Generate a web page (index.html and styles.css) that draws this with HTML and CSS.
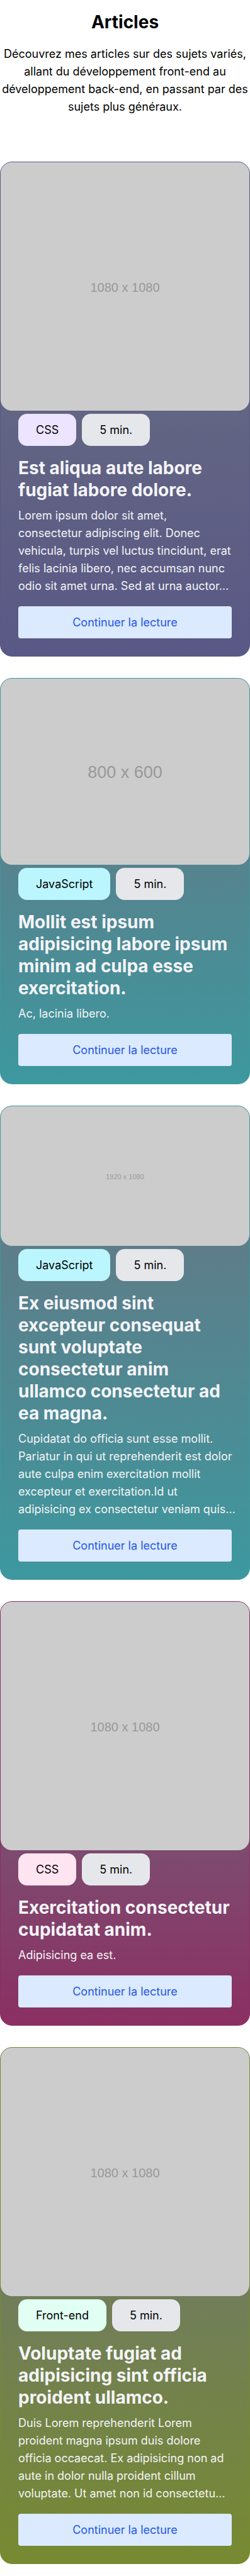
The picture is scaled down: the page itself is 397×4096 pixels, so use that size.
FILE: index.html
```html
<!DOCTYPE html>
<html lang="fr">
<head>
<meta charset="utf-8">
<meta name="viewport" content="width=device-width, initial-scale=1">
<title>Articles</title>
<link rel="stylesheet" href="styles.css">
</head>
<body>
<header class="intro">
  <h1 class="intro-title">Articles</h1>
  <p class="intro-text">Découvrez mes articles sur des sujets variés,<br>allant du développement front-end au<br>développement back-end, en passant par des<br>sujets plus généraux.</p>
</header>
<main class="articles">
  <article class="card card-violet">
    <div class="cover cover-square">1080 x 1080</div>
    <div class="content">
      <div class="badges"><span class="badge badge-topic">CSS</span><span class="badge">5 min.</span></div>
      <h2 class="title">Est aliqua aute labore<br>fugiat labore dolore.</h2>
      <p class="excerpt">Lorem ipsum dolor sit amet,<br>consectetur adipiscing elit. Donec<br>vehicula, turpis vel luctus tincidunt, erat<br>felis lacinia libero, nec accumsan nunc<br>odio sit amet urna. Sed at urna auctor…</p>
      <a class="more" href="#">Continuer la lecture</a>
    </div>
  </article>
  <article class="card card-teal">
    <div class="cover cover-classic">800 x 600</div>
    <div class="content">
      <div class="badges"><span class="badge badge-topic">JavaScript</span><span class="badge">5 min.</span></div>
      <h2 class="title">Mollit est ipsum<br>adipisicing labore ipsum<br>minim ad culpa esse<br>exercitation.</h2>
      <p class="excerpt">Ac, lacinia libero.</p>
      <a class="more" href="#">Continuer la lecture</a>
    </div>
  </article>
  <article class="card card-teal">
    <div class="cover cover-wide">1920 x 1080</div>
    <div class="content">
      <div class="badges"><span class="badge badge-topic">JavaScript</span><span class="badge">5 min.</span></div>
      <h2 class="title">Ex eiusmod sint<br>excepteur consequat<br>sunt voluptate<br>consectetur anim<br>ullamco consectetur ad<br>ea magna.</h2>
      <p class="excerpt">Cupidatat do officia sunt esse mollit.<br>Pariatur in qui ut reprehenderit est dolor<br>aute culpa enim exercitation mollit<br>excepteur et exercitation.Id ut<br>adipisicing ex consectetur veniam quis…</p>
      <a class="more" href="#">Continuer la lecture</a>
    </div>
  </article>
  <article class="card card-pink">
    <div class="cover cover-square">1080 x 1080</div>
    <div class="content">
      <div class="badges"><span class="badge badge-topic">CSS</span><span class="badge">5 min.</span></div>
      <h2 class="title">Exercitation consectetur<br>cupidatat anim.</h2>
      <p class="excerpt">Adipisicing ea est.</p>
      <a class="more" href="#">Continuer la lecture</a>
    </div>
  </article>
  <article class="card card-olive">
    <div class="cover cover-square">1080 x 1080</div>
    <div class="content">
      <div class="badges"><span class="badge badge-topic">Front-end</span><span class="badge">5 min.</span></div>
      <h2 class="title">Voluptate fugiat ad<br>adipisicing sint officia<br>proident ullamco.</h2>
      <p class="excerpt">Duis Lorem reprehenderit Lorem<br>proident magna ipsum duis dolore<br>officia occaecat. Ex adipisicing non ad<br>aute in dolor nulla proident cillum<br>voluptate. Ut amet non id consectetu…</p>
      <a class="more" href="#">Continuer la lecture</a>
    </div>
  </article>
</main>
</body>
</html>
```
FILE: styles.css
```css
* {
  box-sizing: border-box;
}

body {
  margin: 0;
  background: #fff;
  color: #000;
  font-family: Inter, "Liberation Sans", sans-serif;
  font-size: 18px;
  line-height: 28px;
}

h1,
h2,
p {
  margin: 0;
}

.intro {
  display: flex;
  flex-direction: column;
  gap: 20px;
  padding: 18px 0 73px;
  text-align: center;
}

.intro-title {
  font-size: 28px;
  line-height: 34px;
  font-weight: 700;
}

.intro-text {
  white-space: nowrap;
}

.articles {
  display: flex;
  flex-direction: column;
  gap: 34px;
  padding-bottom: 19px;
}

.card {
  border: 1px solid var(--accent);
  border-radius: 19px;
  background: linear-gradient(#6b7280, var(--accent));
}

.card-violet {
  --accent: #5a5886;
  --topic: #ede4ff;
}

.card-teal {
  --accent: #3d989f;
  --topic: #bbf6ff;
}

.card-pink {
  --accent: #8b2f63;
  --topic: #ffe4f1;
}

.card-olive {
  --accent: #778a31;
  --topic: #e1fff2;
}

.cover {
  display: flex;
  align-items: center;
  justify-content: center;
  padding-top: 2px;
  border-radius: 18px;
  background: #ccc;
  color: #999;
  font-family: "Liberation Sans", Arial, sans-serif;
}

.cover-square {
  aspect-ratio: 1;
  font-size: 20px;
}

.cover-classic {
  aspect-ratio: 4 / 3;
  font-size: 27px;
}

.cover-wide {
  aspect-ratio: 16 / 9;
  font-size: 11px;
}

.content {
  display: flex;
  flex-direction: column;
  padding: 5px 28px 28px;
}

.badges {
  display: flex;
  gap: 9px;
  margin-bottom: 18px;
}

.badge {
  padding: 12px 28px 11px;
  border-radius: 14px;
  background: #e5e7eb;
}

.badge-topic {
  background: var(--topic);
}

.title {
  margin-bottom: 9px;
  color: #f4f4f8;
  font-size: 28px;
  line-height: 35px;
  font-weight: 700;
  white-space: nowrap;
}

.excerpt {
  margin-bottom: 18px;
  color: #f4f4f6;
  white-space: nowrap;
}

.more {
  padding: 12px 0 11px;
  border-radius: 4px;
  background: #dbeafe;
  color: #2457e6;
  text-align: center;
  text-decoration: none;
}
```
